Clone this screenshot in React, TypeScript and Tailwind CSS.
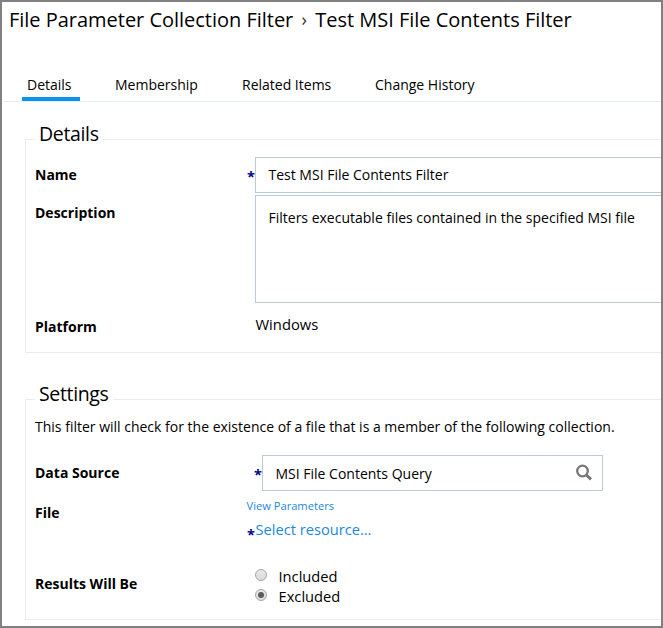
import type { ReactNode } from 'react';

const tabs = [
  { label: 'Details', cell: 'w-[58px] pl-[5px]', active: true },
  { label: 'Membership', cell: 'ml-[30px] w-[92px] pl-[5px]', active: false },
  { label: 'Related Items', cell: 'ml-[35px] w-[98px] pl-[5px]', active: false },
  { label: 'Change History', cell: 'ml-[35px] w-[110px] pl-[5px]', active: false },
];

function Section({ title, className, children }: { title: string; className: string; children: ReactNode }) {
  return (
    <fieldset className={`ml-[23px] w-[700px] border pl-[9px] ${className}`}>
      <legend className="px-1 pb-3 text-[19.5px] leading-[27px] tracking-[-0.35px]">{title}</legend>
      {children}
    </fieldset>
  );
}

function Label({ children, className }: { children: string; className: string }) {
  return <div className={`w-[211px] shrink-0 font-bold leading-5 ${className}`}>{children}</div>;
}

function Required({ className }: { className: string }) {
  return <span className={`w-[9px] shrink-0 pl-px text-[14.5px] font-bold leading-5 text-[#00008b] ${className}`}>*</span>;
}

function Radio({ label, checked = false }: { label: string; checked?: boolean }) {
  return (
    <div className="flex h-5">
      <span className="mt-[3px] flex size-3 shrink-0 items-center justify-center rounded-full border border-[#a5a5a5] bg-linear-to-b from-[#e8e8e8] to-[#dcdcdc]">
        {checked && <span className="size-1.5 rounded-full bg-[#5c5c5c]" />}
      </span>
      <span className="ml-[11.5px] text-[14.7px] leading-[20px]">{label}</span>
    </div>
  );
}

export default function App() {
  return (
    <div className="h-[628px] w-[663px] overflow-hidden whitespace-nowrap border-2 border-[#808080] bg-white font-['Open_Sans',sans-serif] text-sm text-black">
      <h1 className="flex h-[72px] pl-[7px] pt-[4px] text-[20px] leading-[27px] tracking-[-0.02px]">
        <span>File Parameter Collection Filter</span>
        <span className="w-[22px] text-center text-[18px] text-[#333]">›</span>
        <span>Test MSI File Contents Filter</span>
      </h1>

      <nav className="ml-px flex h-[28px] border-b border-[#e8eef3] pl-[19px]">
        {tabs.map((tab) => (
          <div
            key={tab.label}
            className={`h-[27px] leading-[22px] ${tab.cell} ${tab.active ? 'border-b-4 border-[#0a93ec]' : ''}`}
          >
            {tab.label}
          </div>
        ))}
      </nav>

      <Section title="Details" className="mt-[18px] h-[233px] border-[#ececec]">
        <div className="-mt-[2px] flex h-[38px]">
          <Label className="mt-[8px]">Name</Label>
          <Required className="mt-[10px]" />
          <div className="h-9 w-[440px] border border-[#bccad8] pl-[12.5px] leading-[34px]">Test MSI File Contents Filter</div>
        </div>
        <div className="flex h-[108px]">
          <Label className="mt-[8px]">Description</Label>
          <div className="ml-[9px] w-[440px] border border-[#bccad8] pl-[12.5px] pt-3 leading-5">
            Filters executable files contained in the specified MSI file
          </div>
        </div>
        <div className="flex">
          <Label className="mt-[14px]">Platform</Label>
          <div className="ml-[9.5px] mt-[11px] text-[14.75px] leading-5">Windows</div>
        </div>
      </Section>

      <Section title="Settings" className="mt-[27px] h-[240px] border-[#ececec]">
        <p className="-mt-[2px] h-[38px] leading-5">
          This filter will check for the existence of a file that is a member of the following collection.
        </p>
        <div className="flex h-[46px]">
          <Label className="mt-[8px]">Data Source</Label>
          <Required className="ml-[7px] mt-[10px]" />
          <div className="flex h-9 w-[341px] items-center justify-between border border-[#bccad8] pl-[12.5px] pr-[9px]">
            <span className="pt-px">MSI File Contents Query</span>
            <svg className="size-[18px]" viewBox="0 0 18 18" fill="none" stroke="#777">
              <circle cx="7.5" cy="7" r="5.3" strokeWidth="2.3" />
              <path d="m11.4 11 4.6 4.4" strokeWidth="3" />
            </svg>
          </div>
        </div>
        <div className="flex h-[65px]">
          <Label className="mt-[2px]">File</Label>
          <div className="text-[#1b87e0]">
            <div className="pl-[0.5px] text-[11.15px] leading-[10px]">View Parameters</div>
            <div className="mt-[8px] flex text-[14.65px] leading-5">
              <Required className="mt-[6px]" />
              <span className="pl-[0.5px]">Select resource...</span>
            </div>
          </div>
        </div>
        <div className="flex">
          <Label className="mt-[8px]">Results Will Be</Label>
          <div className="ml-[9px]">
            <Radio label="Included" />
            <Radio label="Excluded" checked />
          </div>
        </div>
      </Section>
    </div>
  );
}
